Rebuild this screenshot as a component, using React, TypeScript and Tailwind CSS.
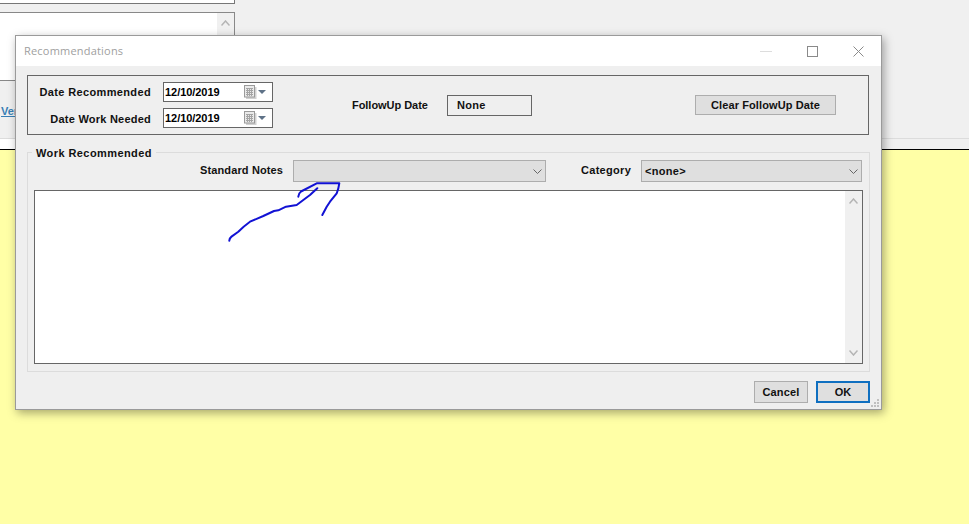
import React from "react";

const font = "font-['Liberation_Sans',Arial,sans-serif]";
const label = "text-[11px] leading-[13px] font-bold text-[#111]";

function DateField({ value }: { value: string }) {
    return (
        <div className="flex h-[20px] w-[110px] items-center border border-[#666] bg-white pl-[1px]">
            <span className="flex-1 text-[11px] font-bold leading-[13px] tracking-[-0.05px] text-black">{value}</span>
            <svg width="13" height="14" viewBox="0 0 13 14">
                <rect x="2" y="2" width="10.5" height="12" fill="#8f8f8f" opacity="0.4" />
                <rect x="0.5" y="0.5" width="10" height="11.5" fill="#eaeaea" stroke="#9a9a9a" />
                <path d="M2 3.5h7M2 5.5h7M2 7.5h7M2 9.5h7M3.5 3v8M5.5 3v8M7.5 3v8" stroke="#a4a4a4" strokeWidth="1" />
            </svg>
            <svg width="8" height="4" viewBox="0 0 8 4" className="ml-[1px] mr-[6px]">
                <path d="M0 0h8L4 4z" fill="#5f7287" />
            </svg>
        </div>
    );
}

function SelectBox({ value, className }: { value?: string; className: string }) {
    return (
        <div className={`flex h-[22px] items-center justify-between border border-[#adadad] bg-[#dfdfdf] pl-[3px] pr-[3px] ${className}`}>
            <span className="text-[11px] font-bold leading-[13px] tracking-[0.3px] text-[#111]">{value}</span>
            <svg width="9" height="5" viewBox="0 0 9 5">
                <path d="M0.5 0.5L4.5 4.5L8.5 0.5" fill="none" stroke="#666" strokeWidth="1" />
            </svg>
        </div>
    );
}

function Chevron({ up }: { up?: boolean }) {
    return (
        <svg width="9" height="6" viewBox="0 0 9 6">
            <path d={up ? "M0.5 5.5L4.5 1L8.5 5.5" : "M0.5 0.5L4.5 5L8.5 0.5"} fill="none" stroke="#b4b4b4" strokeWidth="1.5" />
        </svg>
    );
}

export default function App() {
    return (
        <div className={`relative flex h-[524px] w-[969px] flex-col overflow-hidden bg-[#ffffa6] ${font}`}>
            {/* window behind the dialog */}
            <div className="flex h-[150px] flex-col border-b border-black bg-[#f0f0f0]">
                <div className="h-[4px] w-[235px] border-b border-r border-[#777] bg-white" />
                <div className="mt-[8px] flex h-[69px] w-[235px] justify-end border-r border-t border-b border-[#888] bg-white">
                    <div className="flex w-[17px] justify-center bg-[#f0f0f0] pt-[7px]">
                        <Chevron up />
                    </div>
                </div>
                <div className="flex h-[57px] w-[235px] items-center">
                    <span className="pt-[4px] pl-[1px] text-[11px] font-bold text-[#3a7fb5] underline">Ver</span>
                </div>
                <div className="flex-1 border-t border-[#dcdcdc]">
                    <div className="h-full w-[235px] bg-white" />
                </div>
            </div>
            <div className="flex-1" />

            {/* dialog */}
            <div className="absolute left-[15px] top-[35px] flex h-[375px] w-[867px] flex-col border border-[#9a9a9a] bg-[#efefef] shadow-[2px_3px_9px_rgba(0,0,0,0.35)]">
                <div className="flex h-[30px] shrink-0 items-center justify-between bg-white pl-[8px] pr-[17px]">
                    <span className="font-['Open_Sans',sans-serif] text-[11px] tracking-[0.2px] text-[#a0a0a0]">Recommendations</span>
                    <div className="flex items-center gap-[35px]">
                        <div className="h-[1px] w-[12px] bg-[#ddd]" />
                        <div className="h-[11px] w-[11px] border border-[#8a8a8a]" />
                        <svg width="11" height="11" viewBox="0 0 11 11">
                            <path d="M0.5 0.5L10.5 10.5M10.5 0.5L0.5 10.5" stroke="#8a8a8a" strokeWidth="1" fill="none" />
                        </svg>
                    </div>
                </div>

                <div className="ml-[11px] mt-[9px] flex h-[60px] w-[842px] shrink-0 items-center border border-[#666]">
                    <div className="flex w-[245px] flex-col items-end gap-[6px]">
                        <div className="flex items-center gap-[12px]">
                            <span className={`${label} tracking-[0.36px]`}>Date Recommended</span>
                            <DateField value="12/10/2019" />
                        </div>
                        <div className="flex items-center gap-[12px]">
                            <span className={`${label} pt-[2px] tracking-[0.23px]`}>Date Work Needed</span>
                            <DateField value="12/10/2019" />
                        </div>
                    </div>
                    <span className={`${label} ml-[79px] w-[95px] tracking-[-0.04px]`}>FollowUp Date</span>
                    <div className={`${label} flex h-[21px] w-[85px] items-center border border-[#666] pl-[9px] tracking-[0.3px]`}>None</div>
                    <button className={`${label} ml-[163px] h-[20px] w-[141px] border border-[#adadad] bg-[#dfdfdf] tracking-[0.1px]`}>Clear FollowUp Date</button>
                </div>

                <div className="relative ml-[11px] mt-[17px] flex h-[220px] w-[843px] shrink-0 flex-col border border-[#dcdcdc] px-[6px] pt-[7px]">
                    <span className={`${label} absolute left-[4px] top-[-6px] bg-[#efefef] px-[4px] tracking-[0.42px]`}>Work Recommended</span>
                    <div className="flex items-center">
                        <span className={`${label} ml-[166px] w-[93px] pb-[2px] tracking-[0.13px]`}>Standard Notes</span>
                        <SelectBox className="w-[253px]" />
                        <span className={`${label} ml-[35px] w-[60px] pb-[2px] tracking-[0.3px]`}>Category</span>
                        <SelectBox value="<none>" className="w-[221px]" />
                    </div>
                    <div className="mt-[8px] flex h-[174px] w-[829px] justify-end border border-[#666] bg-white">
                        <div className="flex w-[17px] flex-col items-center justify-between bg-[#f0f0f0] py-[7px]">
                            <Chevron up />
                            <Chevron />
                        </div>
                    </div>
                </div>

                <div className="mr-[11px] mt-[9px] flex justify-end gap-[8px]">
                    <button className={`${label} h-[22px] w-[54px] border border-[#adadad] bg-[#dfdfdf] tracking-[0.15px]`}>Cancel</button>
                    <button className={`${label} h-[22px] w-[54px] border-2 border-[#0f6fc0] bg-[#dfdfdf]`}>OK</button>
                </div>

                <svg width="10" height="10" viewBox="0 0 10 10" className="absolute bottom-[1px] right-[1px]">
                    <path d="M7 1h2v2H7zM4 4h2v2H4zM7 4h2v2H7zM1 7h2v2H1zM4 7h2v2H4zM7 7h2v2H7z" fill="#c0c0c0" />
                </svg>
            </div>

            {/* pen scribble on top of the screenshot */}
            <svg width="969" height="524" viewBox="0 0 969 524" className="pointer-events-none absolute left-0 top-0">
                <path
                    d="M229.3 240.7Q229.6 238 231.5 236.6L238.3 231.7Q244 226 250 221.7L263.3 216L274 211L278.3 210.3L286 206.7L296.7 205L303.3 200L310 195L317.3 188.3"
                    fill="none"
                    stroke="#1212d4"
                    strokeWidth="2"
                    strokeLinecap="round"
                    strokeLinejoin="round"
                />
                <path
                    d="M298.3 196.7Q298.8 193 301 191.5L316.7 183.3L339.3 183.3Q338.5 189 336.7 193.3L330 201.7L326.7 206.7L322.3 215"
                    fill="none"
                    stroke="#1212d4"
                    strokeWidth="2"
                    strokeLinecap="round"
                    strokeLinejoin="round"
                />
            </svg>
        </div>
    );
}
